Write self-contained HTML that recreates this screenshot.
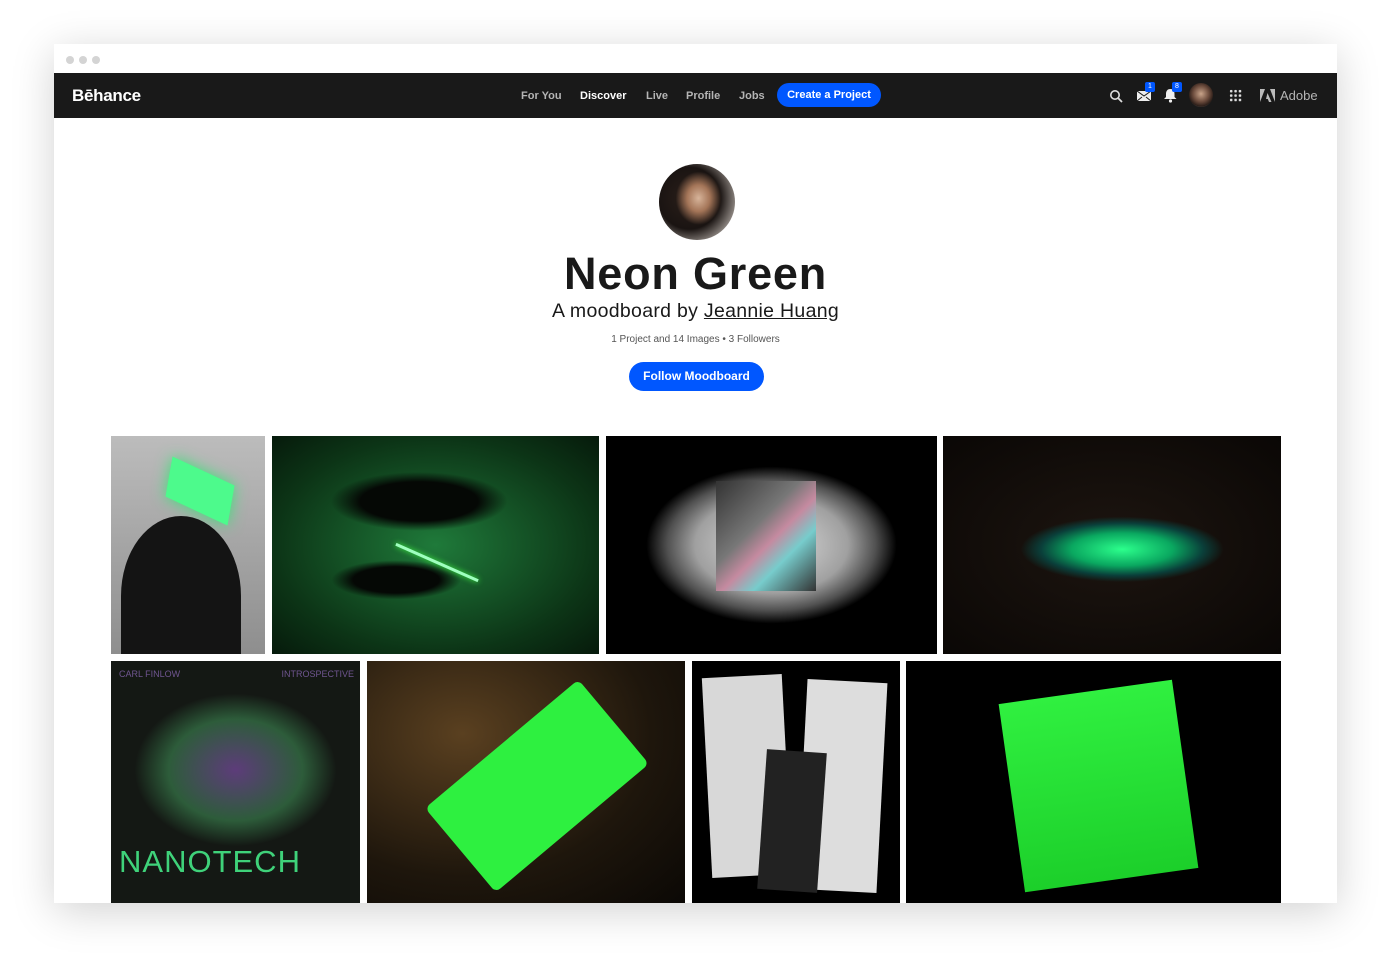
<!DOCTYPE html>
<html><head><meta charset="utf-8"><style>
*{margin:0;padding:0;box-sizing:border-box}
body{width:1391px;height:965px;background:#fff;position:relative;overflow:hidden;font-family:"Liberation Sans",Arial,sans-serif}
.win{position:absolute;left:54px;top:44px;width:1283px;height:859px;background:#fff;box-shadow:0 8px 40px rgba(0,0,0,.18);overflow:hidden}
.bar{height:29px;background:#fff;position:relative}
.dot{position:absolute;top:12px;width:8px;height:8px;border-radius:50%;background:#d4d4d4}
.nav{position:absolute;top:29px;left:0;width:1283px;height:45px;background:#191919;color:#fff}
.logo{position:absolute;left:18px;top:13px;font-size:17px;font-weight:bold;letter-spacing:-.3px}
.links{position:absolute;top:17px;font-size:11px;font-weight:bold;color:#b5b5b5}
.links span{position:absolute;white-space:nowrap}
.cta{position:absolute;left:723px;top:10px;width:104px;height:24px;border-radius:12px;background:#0057ff;color:#fff;font-size:11px;font-weight:bold;text-align:center;line-height:25px}
.badge{position:absolute;width:10px;height:10px;background:#0057ff;border-radius:2px;font-size:7px;color:#fff;text-align:center;line-height:10px}
.img{position:absolute;overflow:hidden}
h1{position:absolute;top:204px;width:100%;text-align:center;font-size:45px;font-weight:900;color:#191919;letter-spacing:.8px}
</style></head><body>
<div class="win">
<div class="bar"><div class="dot" style="left:12px"></div><div class="dot" style="left:25px"></div><div class="dot" style="left:38px"></div></div>
<div class="nav">
<div class="logo">Bēhance</div>
<div class="links"><span style="left:467px">For You</span><span style="left:526px;color:#fff">Discover</span><span style="left:592px">Live</span><span style="left:632px">Profile</span><span style="left:685px">Jobs</span></div>
<div class="cta">Create a Project</div>
<svg style="position:absolute;left:1055px;top:16px" width="14" height="14" viewBox="0 0 14 14"><circle cx="6" cy="6" r="4.2" fill="none" stroke="#ddd" stroke-width="1.6"/><path d="M9 9l4 4" stroke="#ddd" stroke-width="1.8"/></svg>
<svg style="position:absolute;left:1083px;top:18px" width="14" height="10" viewBox="0 0 14 10"><rect width="14" height="10" fill="#eee"/><path d="M0 0l7 5 7-5M0 10l5-4M14 10l-5-4" stroke="#191919" stroke-width="1" fill="none"/></svg>
<div class="badge" style="left:1091px;top:9px">1</div>
<svg style="position:absolute;left:1110px;top:15px" width="13" height="15" viewBox="0 0 13 15"><path d="M6.5 1c3 0 4 2.5 4 5v3l2 2H0l2-2V6c0-2.5 1-5 4.5-5z" fill="#eee"/><circle cx="6.5" cy="13" r="1.6" fill="#eee"/></svg>
<div class="badge" style="left:1118px;top:9px">8</div>
<div style="position:absolute;left:1135px;top:10px;width:24px;height:24px;border-radius:50%;background:radial-gradient(circle at 50% 45%,#c9a48a 0,#6b4b3c 45%,#2a1d18 70%,#ccc 90%)"></div>
<div style="position:absolute;left:1175px;top:16px;width:13px;height:13px;background-image:radial-gradient(circle,#ddd 1.3px,transparent 1.5px);background-size:4.4px 4.4px"></div>
<svg style="position:absolute;left:1206px;top:16px" width="15" height="13" viewBox="0 0 15 13"><path d="M0 13L5 0H0zM15 13L10 0h5zM7.5 4l4 9H9l-1.2-3H6z" fill="#bbb"/></svg>
<div style="position:absolute;left:1226px;top:15px;font-size:13px;color:#b5b5b5">Adobe</div>
</div>
<div style="position:absolute;left:605px;top:120px;width:76px;height:76px;border-radius:50%;background:radial-gradient(ellipse 30% 35% at 52% 45%,#d7b49a 0,#a47558 50%,transparent 100%),radial-gradient(circle at 40% 45%,#2b1f1a 0,#1a1412 50%,#8c8580 75%,#e8e4df 100%)"></div>
<h1>Neon Green</h1>
<div style="position:absolute;top:256px;width:100%;text-align:center;font-size:19.5px;color:#191919;letter-spacing:.3px">A moodboard by <u>Jeannie Huang</u></div>
<div style="position:absolute;top:290px;width:100%;text-align:center;font-size:10px;color:#555">1 Project and 14 Images • 3 Followers</div>
<div style="position:absolute;left:575px;top:318px;width:135px;height:29px;border-radius:15px;background:#0057ff;color:#fff;font-size:12px;font-weight:bold;text-align:center;line-height:29px">Follow Moodboard</div>

<div class="img" style="left:57px;top:392px;width:154px;height:218px;background:linear-gradient(#bcbcbc,#8e8e8e)">
<div style="position:absolute;left:58px;top:35px;width:62px;height:40px;background:#4dfa8c;transform:skew(-10deg,25deg);box-shadow:0 0 14px #3ee27a"></div>
<div style="position:absolute;left:10px;top:80px;width:120px;height:160px;border-radius:50% 50% 0 0;background:#141414"></div>
</div>
<div class="img" style="left:218px;top:392px;width:327px;height:218px;background:radial-gradient(ellipse 30% 15% at 45% 30%,#050805 60%,transparent 90%),radial-gradient(ellipse 22% 10% at 38% 66%,#050805 60%,transparent 90%),radial-gradient(ellipse at 50% 50%,#1f7a3a,#0c3416 70%,#061a0b)">
<div style="position:absolute;left:120px;top:125px;width:90px;height:3px;background:#9fffbf;transform:rotate(24deg);box-shadow:0 0 6px #4f4"></div></div>
<div class="img" style="left:552px;top:392px;width:331px;height:218px;background:radial-gradient(ellipse 42% 40% at 50% 50%,#e0e0e0,#a0a0a0 55%,#505050 75%,#000 90%),#000">
<div style="position:absolute;left:110px;top:45px;width:100px;height:110px;background:linear-gradient(135deg,#333,#777 40%,#c58aa0 55%,#7cc 70%,#333)"></div></div>
<div class="img" style="left:889px;top:392px;width:338px;height:218px;background:radial-gradient(ellipse 30% 15% at 53% 52%,#2cff8c 0,#0aa860 50%,#0a3f3a 80%,transparent 100%),radial-gradient(#1d1510,#0a0705)"></div>
<div class="img" style="left:57px;top:617px;width:249px;height:242px;background:radial-gradient(ellipse 45% 35% at 50% 45%,#5d3c7a,#2d5c3a 60%,#141814 90%),#141814"><div style="position:absolute;left:8px;top:8px;font-size:9px;color:#6f5590">CARL FINLOW</div><div style="position:absolute;right:6px;top:8px;font-size:9px;color:#6f5590">INTROSPECTIVE</div><div style="position:absolute;left:8px;top:183px;font-size:31px;color:#3fd27a;letter-spacing:1px;font-weight:300">NANOTECH</div></div>
<div class="img" style="left:313px;top:617px;width:318px;height:242px;background:radial-gradient(ellipse at 30% 30%,#5a4020,#1e160c 60%,#0b0805)">
<div style="position:absolute;left:70px;top:70px;width:200px;height:110px;background:#2ef040;transform:rotate(-40deg);border-radius:6px"></div></div>
<div class="img" style="left:638px;top:617px;width:208px;height:242px;background:#000">
<div style="position:absolute;left:15px;top:15px;width:80px;height:200px;background:#d8d8d8;transform:rotate(-3deg)"></div>
<div style="position:absolute;left:110px;top:20px;width:80px;height:210px;background:#ddd;transform:rotate(3deg)"></div>
<div style="position:absolute;left:70px;top:90px;width:60px;height:140px;background:#222;transform:rotate(4deg)"></div></div>
<div class="img" style="left:852px;top:617px;width:375px;height:242px;background:#000">
<div style="position:absolute;left:105px;top:30px;width:175px;height:190px;background:linear-gradient(#30f040,#1ccf2a);transform:rotate(-8deg)"></div></div>
</div>
</body></html>
